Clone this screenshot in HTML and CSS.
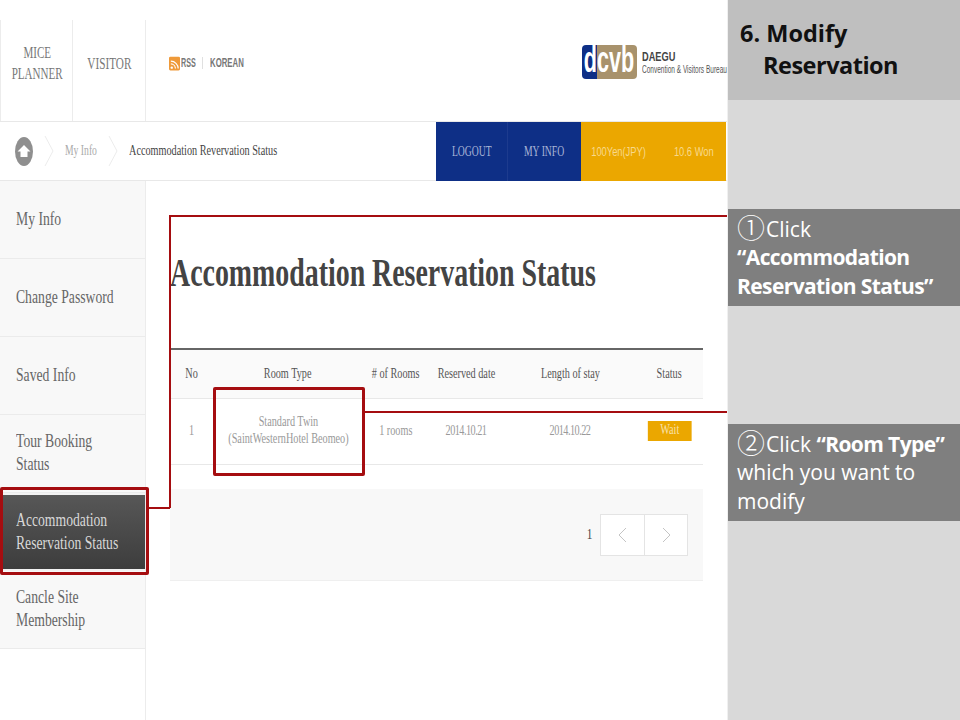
FILE: index.html
```html
<!DOCTYPE html>
<html lang="en">
<head>
<meta charset="utf-8">
<title>Modify Reservation</title>
<link rel="stylesheet" href="styles.css">
</head>
<body>
<div class="slide">
  <div class="shot">
    <header class="top">
      <div class="top-cell first"><span class="top-text">MICE<br>PLANNER</span></div>
      <div class="top-cell"><span class="top-text visitor">VISITOR</span></div>
      <div class="util">
        <svg class="rss" viewBox="0 0 12 15" aria-hidden="true">
          <rect width="12" height="15" rx="1.5" fill="#ef9a3a"/>
          <circle cx="3" cy="12" r="1.3" fill="#fff"/>
          <path d="M2 8a5 5 0 0 1 5 5M2 5a8 8 0 0 1 8 8" fill="none" stroke="#fff" stroke-width="1.3"/>
        </svg>
        <span class="util-text util-rss">RSS</span>
        <span class="util-sep"></span>
        <span class="util-text util-kor">KOREAN</span>
      </div>
      <div class="logo">
        <div class="logo-mark"><span class="logo-text">dcvb</span></div>
        <div class="logo-words"><b>DAEGU</b><span>Convention &amp; Visitors Bureau</span></div>
      </div>
    </header>
    <nav class="crumbs">
      <svg class="home" viewBox="0 0 18 29" aria-hidden="true">
        <ellipse cx="9" cy="14.5" rx="9" ry="14.500" fill="#8f8f8f"/>
        <path d="M9 8 2.500 14.500H5.500V20h7v-5.500h3z" fill="#fff"/>
      </svg>
      <svg class="chev first-chev" viewBox="0 0 10 30" aria-hidden="true"><path d="M1 0 9 15 1 30" fill="none" stroke="#ececec"/></svg>
      <span class="crumb-a">My Info</span>
      <svg class="chev" viewBox="0 0 10 30" aria-hidden="true"><path d="M1 0 9 15 1 30" fill="none" stroke="#ececec"/></svg>
      <span class="crumb-b">Accommodation Revervation Status</span>
      <div class="crumb-btns">
        <div class="blue b1"><span>LOGOUT</span></div>
        <div class="blue b2"><span>MY INFO</span></div>
        <div class="gold g1"><span>100Yen(JPY)</span></div>
        <div class="gold g2"><span>10.6 Won</span></div>
      </div>
    </nav>
    <div class="body">
      <aside class="side">
        <a class="item"><span>My Info</span></a>
        <a class="item"><span>Change Password</span></a>
        <a class="item"><span>Saved Info</span></a>
        <a class="item"><span>Tour Booking<br>Status</span></a>
        <a class="item active"><span>Accommodation<br>Reservation Status</span></a>
        <a class="item"><span>Cancle Site<br>Membership</span></a>
      </aside>
      <main class="main">
        <h1 class="title"><span>Accommodation Reservation Status</span></h1>
        <div class="table">
          <div class="row head">
            <span>No</span><span>Room Type</span><span># of Rooms</span><span>Reserved date</span><span>Length of stay</span><span>Status</span>
          </div>
          <div class="row data">
            <span>1</span><span>Standard Twin<br>(SaintWesternHotel Beomeo)</span><span>1 rooms</span><span class="date">2014.10.21</span><span class="date">2014.10.22</span><span><em class="wait">Wait</em></span>
          </div>
        </div>
        <div class="pager">
          <span class="page-no">1</span>
          <div class="page-btns">
            <span class="page-btn"><svg viewBox="0 0 9 16" aria-hidden="true"><path d="M8 1 1 8l7 7" fill="none" stroke="#c4c4c4"/></svg></span>
            <span class="page-btn"><svg viewBox="0 0 9 16" aria-hidden="true"><path d="m1 1 7 7-7 7" fill="none" stroke="#c4c4c4"/></svg></span>
          </div>
        </div>
      </main>
    </div>
    <div class="mark mark-side"></div>
    <div class="mark mark-room"></div>
    <div class="line line-one"></div>
    <div class="line line-stub"></div>
    <div class="line line-two"></div>
  </div>
  <aside class="panel">
    <div class="panel-title">6. Modify<br><span class="indent">Reservation</span></div>
    <div class="note note-one"><span class="num">①</span>Click<br><b>“Accommodation<br>Reservation Status”</b></div>
    <div class="note note-two"><span class="num">②</span>Click <b>“Room Type”</b><br>which you want to<br>modify</div>
  </aside>
</div>
</body>
</html>
```
FILE: styles.css
```css
* { box-sizing: border-box; }
html, body { margin: 0; padding: 0; }
body { width: 960px; height: 720px; overflow: hidden; background: #fff; font-family: "Liberation Serif", serif; }
.slide { display: flex; width: 960px; height: 720px; }
.shot { position: relative; width: 728px; height: 720px; padding-top: 20px; background: #fff; border-right: 1px solid #f0f0f0; }

.top { display: flex; align-items: stretch; height: 102px; width: 727px; border-bottom: 1px solid #e8e8e8; }
.top-cell { display: flex; align-items: center; justify-content: center; width: 73px; border-right: 1px solid #ececec; }
.top-cell.first { border-left: 1px solid #ececec; padding-left: 1px; }
.top-text { display: block; font-size: 17px; line-height: 21px; color: #777; text-align: center; padding-bottom: 15px; transform: scaleX(.65); }
.visitor { padding-bottom: 14px; transform: scaleX(.66); }
.util { display: flex; align-items: center; margin-left: 23px; height: 86px; }
.rss { width: 11px; height: 15px; flex: none; }
.util-text { display: block; font-family: "Liberation Sans", sans-serif; font-size: 12px; font-weight: 700; color: #777; transform-origin: left; white-space: nowrap; }
.util-rss { width: 16px; margin-left: 1px; transform: scaleX(.6); }
.util-kor { width: 34px; transform: scaleX(.65); }
.util-sep { width: 1px; height: 12px; margin: 0 7px 0 5px; background: #e0e0e0; }
.logo { display: flex; align-items: center; gap: 5px; margin-left: auto; height: 84px; }
.logo-mark { display: flex; justify-content: center; align-items: center; width: 55px; height: 34px; border-radius: 4px; background: linear-gradient(90deg, #0e2f86 15px, #a8926c 15px); }
.logo-text { display: block; color: #fff; font: 700 36px/34px "Liberation Sans", sans-serif; transform: scaleX(.6); padding-bottom: 4px; }
.logo-words { display: flex; flex-direction: column; width: 85px; white-space: nowrap; font-family: "Liberation Sans", sans-serif; color: #555; }
.logo-words b { font-size: 13px; line-height: 13px; color: #444; transform: scaleX(.71); transform-origin: left; }
.logo-words span { font-size: 10.500px; line-height: 12px; transform: scaleX(.62); transform-origin: left; }

.crumbs { display: flex; align-items: center; height: 59px; width: 727px; border-bottom: 1px solid #e8e8e8; }
.home { width: 18px; height: 29px; margin-left: 15px; flex: none; }
.chev { width: 10px; height: 30px; flex: none; }
.first-chev { margin-left: 11px; margin-right: 11px; }
.crumb-a { width: 43px; font-size: 14px; color: #aaa; transform: scaleX(.69); transform-origin: left; white-space: nowrap; }
.crumb-b { margin-left: 11px; width: 148px; font-size: 14px; color: #444; transform: scaleX(.73); transform-origin: left; white-space: nowrap; }
.crumb-btns { display: flex; margin-left: auto; margin-right: 1px; height: 59px; margin-bottom: -1px; }
.blue, .gold { display: flex; align-items: center; justify-content: center; height: 59px; white-space: nowrap; }
.blue span, .gold span { display: block; transform: scaleX(.69); }
.blue { background: #0e2f86; color: #a9b5d6; font-size: 14px; }
.b1 { width: 72px; border-right: 1px solid #1d3b8e; }
.b2 { width: 73px; }
.gold { background: #eba700; color: #f8d98c; font-family: "Liberation Sans", sans-serif; font-size: 13.500px; }
.g1 { width: 75px; }
.g2 { width: 70px; padding-left: 5px; }

.body { display: flex; height: 539px; }
.side { width: 146px; flex: none; border-right: 1px solid #ececec; }
.item { display: flex; align-items: center; height: 78px; padding: 0 0 3px 16px; background: #f8f8f8; border-bottom: 1px solid #ebebeb; font-size: 19px; line-height: 23px; color: #666; white-space: nowrap; }
.item span { display: block; transform: scaleX(.72); transform-origin: left; }
.active { background: linear-gradient(#575757, #3d3d3d); color: #d8d8d8; border-top: 2px solid #f2f2f2; border-bottom: 2px solid #f2f2f2; }
.main { flex: 1; padding: 0 24px; }
.title { margin: 66px 0 0; height: 101px; font-size: 40px; line-height: 52px; font-weight: 700; color: #444; white-space: nowrap; }
.title span { display: inline-block; transform: scaleX(.697); transform-origin: left; }
.table { width: 533px; border-top: 2px solid #666; }
.row { display: grid; grid-template-columns: 43px 150px 65px 77px 130px 68px; align-items: center; text-align: center; font-size: 14px; white-space: nowrap; }
.row span { display: block; justify-self: center; transform: scaleX(.73); }
.head { height: 49px; background: #fafafa; border-bottom: 1px solid #e8e8e8; color: #555; }
.data { height: 66px; padding-bottom: 3px; border-bottom: 1px solid #e8e8e8; color: #999; line-height: 17px; }
.row .date { letter-spacing: -.7px; }
.wait { display: inline-block; width: 60px; height: 20px; margin: 2px 0 0 2px; line-height: 18px; background: #eba700; color: #f8e2ae; font-style: normal; }
.pager { display: flex; align-items: center; justify-content: flex-end; gap: 7px; width: 533px; height: 92px; margin-top: 24px; padding-right: 15px; background: #f8f8f8; border-bottom: 1px solid #efefef; }
.page-no { font-size: 14px; color: #444; transform: scaleX(.8); }
.page-btns { display: flex; height: 42px; background: #fff; border: 1px solid #e4e4e4; }
.page-btn { display: flex; align-items: center; justify-content: center; width: 43px; }
.page-btn + .page-btn { border-left: 1px solid #e4e4e4; }
.page-btn svg { width: 9px; height: 16px; }

.mark { position: absolute; border: 3px solid #a50d10; border-radius: 2px; }
.mark-side { left: 0; top: 487px; width: 149px; height: 88px; }
.mark-room { left: 213px; top: 387px; width: 152px; height: 89px; }
.line { position: absolute; background: #a50d10; }
.line-one { left: 169px; top: 215px; width: 558px; height: 293px; background: none; border-left: 2px solid #a50d10; border-top: 2px solid #a50d10; }
.line-stub { left: 148px; top: 507px; width: 22px; height: 2px; }
.line-two { left: 364px; top: 411px; width: 363px; height: 2px; }

.panel { width: 232px; height: 720px; background: #d9d9d9; font-family: "Open Sans", "Noto Sans CJK KR", sans-serif; }
.panel-title { height: 100px; padding: 17px 0 0 12px; background: #bfbfbf; color: #111; font-size: 23.500px; line-height: 32px; font-weight: 700; }
.indent { margin-left: 23px; letter-spacing: -.5px; }
.note { width: 232px; height: 97px; padding: 5.500px 0 0 9px; background: #7f7f7f; color: #fff; font-size: 21px; line-height: 28.500px; white-space: nowrap; }
.note b { font-weight: 700; letter-spacing: -.6px; }
.note-one { margin-top: 109px; }
.note-two { margin-top: 118px; }
.num { margin-right: 1px; font-family: "Noto Sans CJK KR", sans-serif; font-size: 28px; line-height: 24px; vertical-align: -2px; font-weight: 300; }
```
